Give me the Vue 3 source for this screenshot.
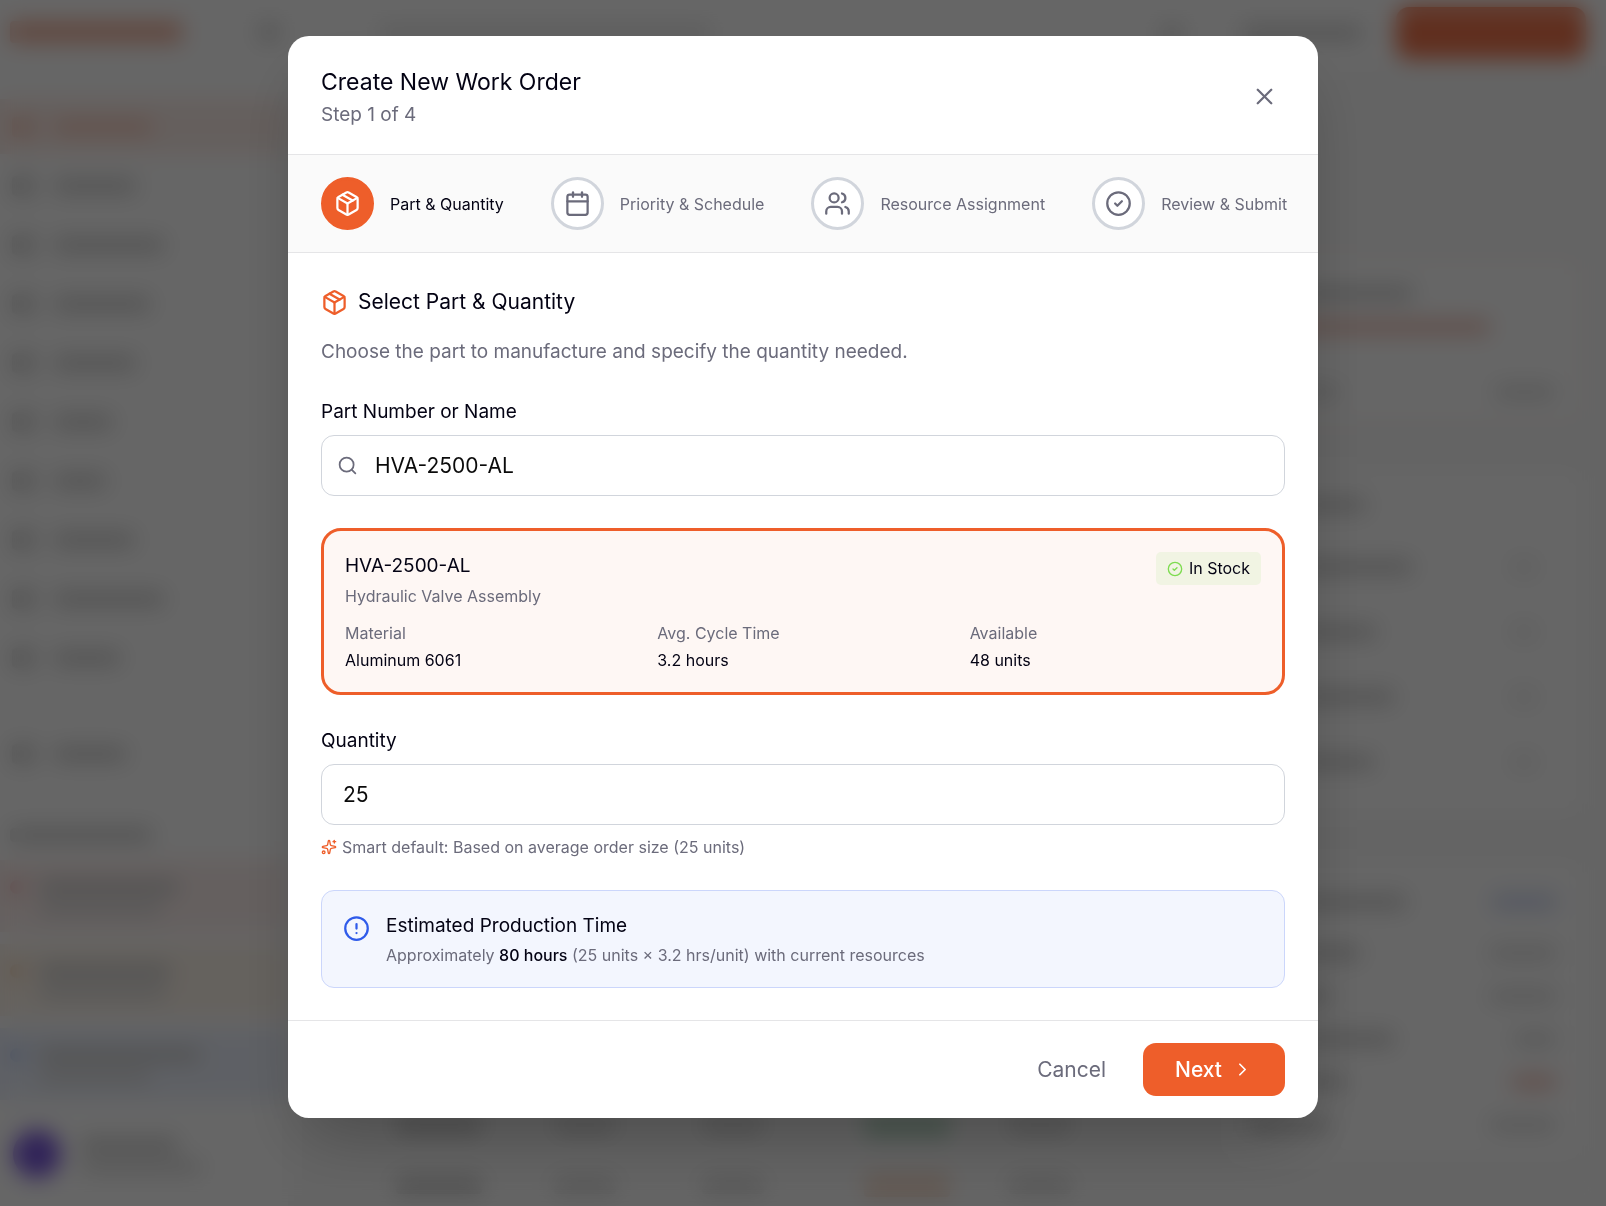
<template>
  <div class="page">
    <!-- dashboard behind the dialog -->
    <div class="dashboard" aria-hidden="true">
      <aside class="sidebar">
        <div class="brand">
          <span class="bar logo"></span>
          <span class="bar toggle"></span>
        </div>
        <div v-for="(w, i) in navWidths" :key="'nav' + i" class="nav-row" :class="{ active: i === 0 }">
          <span class="bar nav-icon"></span>
          <span class="bar nav-label" :style="{ width: w + 'px' }"></span>
        </div>
        <div class="nav-row settings">
          <span class="bar nav-icon"></span>
          <span class="bar nav-label short"></span>
        </div>
        <div class="alerts-heading"><span class="bar"></span></div>
        <div v-for="a in alerts" :key="a.tone" class="alert" :class="a.tone">
          <span class="dot"></span>
          <div class="alert-lines">
            <span class="bar" :style="{ width: a.first + 'px' }"></span>
            <span class="bar light" :style="{ width: a.second + 'px' }"></span>
          </div>
        </div>
        <div class="profile">
          <span class="avatar"></span>
          <div class="profile-lines">
            <span class="bar"></span>
            <span class="bar light"></span>
          </div>
        </div>
      </aside>

      <div class="main">
        <div class="topbar">
          <span class="bar search-line"></span>
          <span class="bar bell"></span>
          <span class="bar user"></span>
          <span class="create"></span>
        </div>
        <div class="columns">
          <div class="orders">
            <div v-for="tone in ['green', 'orange']" :key="tone" class="order-row">
              <span class="bar"></span>
              <span class="bar light"></span>
              <span class="bar light"></span>
              <span class="status" :class="tone"></span>
              <span class="bar light"></span>
            </div>
          </div>
          <div class="widgets">
            <div class="widget risk">
              <div class="line"><span class="bar title-line"></span></div>
              <div class="line"><span class="bar red-line"></span></div>
              <div class="line last">
                <span class="bar light"></span>
                <span class="bar light"></span>
              </div>
            </div>
            <div class="widget team">
              <div v-for="(w, i) in teamWidths" :key="'team' + i" class="line">
                <span class="bar" :style="{ width: w + 'px' }"></span>
                <span v-if="i > 0" class="bar badge-dot"></span>
              </div>
            </div>
            <div class="widget stats">
              <div v-for="(s, i) in stats" :key="'stat' + i" class="line">
                <span class="bar" :style="{ width: s.left + 'px' }"></span>
                <span class="bar light" :class="s.tone" :style="{ width: s.right + 'px' }"></span>
              </div>
            </div>
          </div>
        </div>
      </div>
    </div>

    <div class="overlay">
      <div class="modal" role="dialog" aria-modal="true" aria-labelledby="dialog-title">
        <header class="modal-header">
          <div>
            <h2 id="dialog-title">Create New Work Order</h2>
            <p>Step 1 of 4</p>
          </div>
          <button type="button" class="close" aria-label="Close">
            <svg class="icon" viewBox="0 0 24 24"><path d="M18 6 6 18" /><path d="m6 6 12 12" /></svg>
          </button>
        </header>

        <ol class="stepper">
          <li v-for="(step, i) in steps" :key="step.label" class="step" :class="{ current: i === 0 }">
            <span class="step-circle">
              <svg class="icon" viewBox="0 0 24 24"><path v-for="d in step.paths" :key="d" :d="d" /></svg>
            </span>
            <span class="step-label">{{ step.label }}</span>
          </li>
        </ol>

        <div class="modal-body">
          <h3>
            <svg class="icon" viewBox="0 0 24 24"><path v-for="d in packageIcon" :key="d" :d="d" /></svg>
            Select Part &amp; Quantity
          </h3>
          <p class="description">Choose the part to manufacture and specify the quantity needed.</p>

          <label for="part">Part Number or Name</label>
          <div class="field">
            <svg class="icon search-icon" viewBox="0 0 24 24"><circle cx="11" cy="11" r="8" /><path d="m21 21-4.3-4.3" /></svg>
            <input id="part" v-model="part" type="text" class="with-icon" />
          </div>

          <section class="part-card">
            <div class="part-top">
              <div>
                <h4>HVA-2500-AL</h4>
                <p>Hydraulic Valve Assembly</p>
              </div>
              <span class="stock">
                <svg class="icon" viewBox="0 0 24 24"><path v-for="d in checkIcon" :key="d" :d="d" /></svg>
                In Stock
              </span>
            </div>
            <dl class="part-facts">
              <div v-for="fact in facts" :key="fact.name">
                <dt>{{ fact.name }}</dt>
                <dd>{{ fact.value }}</dd>
              </div>
            </dl>
          </section>

          <label for="quantity">Quantity</label>
          <div class="field">
            <input id="quantity" v-model="quantity" type="text" inputmode="numeric" />
          </div>
          <p class="hint">
            <svg class="icon" viewBox="0 0 24 24">
              <path d="M11.017 2.814a1 1 0 0 1 1.966 0l1.051 5.558a2 2 0 0 0 1.594 1.594l5.558 1.051a1 1 0 0 1 0 1.966l-5.558 1.051a2 2 0 0 0-1.594 1.594l-1.051 5.558a1 1 0 0 1-1.966 0l-1.051-5.558a2 2 0 0 0-1.594-1.594l-5.558-1.051a1 1 0 0 1 0-1.966l5.558-1.051a2 2 0 0 0 1.594-1.594z" />
              <path d="M20 2v4" /><path d="M22 4h-4" /><circle cx="4" cy="20" r="2" />
            </svg>
            Smart default: Based on average order size (25 units)
          </p>

          <section class="estimate">
            <svg class="icon" viewBox="0 0 24 24"><circle cx="12" cy="12" r="10" /><path d="M12 8v4" /><path d="M12 16h.01" /></svg>
            <div>
              <h4>Estimated Production Time</h4>
              <p>Approximately <strong>80 hours</strong> (25 units × 3.2 hrs/unit) with current resources</p>
            </div>
          </section>
        </div>

        <footer class="modal-footer">
          <button type="button" class="cancel">Cancel</button>
          <button type="button" class="next">
            Next
            <svg class="icon" viewBox="0 0 24 24"><path d="m9 18 6-6-6-6" /></svg>
          </button>
        </footer>
      </div>
    </div>
  </div>
</template>

<script setup>
import { ref } from 'vue';

const part = ref('HVA-2500-AL');
const quantity = ref('25');

const packageIcon = [
  'M11 21.73a2 2 0 0 0 2 0l7-4A2 2 0 0 0 21 16V8a2 2 0 0 0-1-1.73l-7-4a2 2 0 0 0-2 0l-7 4A2 2 0 0 0 3 8v8a2 2 0 0 0 1 1.73z',
  'M12 22V12',
  'M3.29 7 12 12l8.71-5',
  'm7.5 4.27 9 5.15',
];

const checkIcon = [
  'M12 2a10 10 0 1 0 0 20 10 10 0 1 0 0-20z',
  'm9 12 2 2 4-4',
];

const steps = [
  { label: 'Part & Quantity', paths: packageIcon },
  {
    label: 'Priority & Schedule',
    paths: [
      'M8 2v4',
      'M16 2v4',
      'M5 4h14a2 2 0 0 1 2 2v14a2 2 0 0 1-2 2H5a2 2 0 0 1-2-2V6a2 2 0 0 1 2-2z',
      'M3 10h18',
    ],
  },
  {
    label: 'Resource Assignment',
    paths: [
      'M16 21v-2a4 4 0 0 0-4-4H6a4 4 0 0 0-4 4v2',
      'M9 3a4 4 0 1 0 0 8 4 4 0 1 0 0-8z',
      'M22 21v-2a4 4 0 0 0-3-3.87',
      'M16 3.13a4 4 0 0 1 0 7.75',
    ],
  },
  { label: 'Review & Submit', paths: checkIcon },
];

const facts = [
  { name: 'Material', value: 'Aluminum 6061' },
  { name: 'Avg. Cycle Time', value: '3.2 hours' },
  { name: 'Available', value: '48 units' },
];

const navWidths = [98, 82, 110, 96, 82, 58, 52, 80, 110, 66];

const alerts = [
  { tone: 'red', first: 138, second: 122 },
  { tone: 'amber', first: 130, second: 126 },
  { tone: 'blue', first: 160, second: 110 },
];

const teamWidths = [118, 164, 128, 146, 126];

const stats = [
  { left: 158, right: 64, tone: 'link' },
  { left: 112, right: 66, tone: '' },
  { left: 82, right: 66, tone: '' },
  { left: 146, right: 42, tone: '' },
  { left: 98, right: 44, tone: 'late' },
  { left: 82, right: 66, tone: '' },
];
</script>

<style>
body {
  margin: 0;
}
</style>

<style scoped>
* {
  box-sizing: border-box;
}

h2,
h3,
h4,
p,
dl,
dd,
ol {
  margin: 0;
  padding: 0;
  font-weight: 400;
}

button,
input {
  font-family: inherit;
}

.page {
  position: relative;
  height: 100vh;
  overflow: hidden;
  font-family: Inter, "Liberation Sans", sans-serif;
  color: #030213;
}

.icon {
  flex: none;
  width: 27px;
  height: 27px;
  fill: none;
  stroke: currentColor;
  stroke-width: 2;
  stroke-linecap: round;
  stroke-linejoin: round;
}

/* dashboard */
.dashboard {
  display: flex;
  height: 100%;
  background: #fff;
}

.bar {
  flex: none;
  display: block;
  height: 14px;
  border-radius: 4px;
  background: #cdcdcd;
}

.bar.light {
  background: #dcdcdc;
}

.sidebar {
  flex: none;
  width: 288px;
}

.brand {
  display: flex;
  justify-content: space-between;
  align-items: center;
  height: 99px;
  padding: 0 10px 35px;
}

.brand .logo {
  width: 172px;
  height: 22px;
  background: #f2b39e;
}

.brand .toggle {
  width: 18px;
  height: 18px;
}

.nav-row {
  display: flex;
  align-items: center;
  gap: 20px;
  height: 55px;
  margin-bottom: 4px;
  padding-left: 12px;
}

.nav-row.active {
  background: #fdeee9;
}

.nav-row.active .bar {
  background: #f7c8b9;
}

.nav-row.settings {
  margin-top: 41px;
}

.nav-icon {
  width: 22px;
  height: 20px;
}

.nav-label.short {
  width: 72px;
}

.alerts-heading {
  height: 75px;
  padding: 43px 10px 0;
}

.alerts-heading .bar {
  width: 142px;
}

.alert {
  display: flex;
  gap: 16px;
  height: 72px;
  margin-bottom: 12px;
  padding: 20px 10px;
}

.alert.red {
  background: #fdf0ee;
}

.alert.amber {
  background: #fdf4ea;
}

.alert.blue {
  background: #ecf1fc;
}

.dot {
  width: 14px;
  height: 14px;
  border-radius: 50%;
  background: #f0a8a8;
}

.amber .dot {
  background: #f3c8a0;
}

.blue .dot {
  background: #a8c0f5;
}

.alert-lines,
.profile-lines {
  display: flex;
  flex-direction: column;
  gap: 8px;
}

.profile {
  display: flex;
  gap: 20px;
  padding: 18px 13px;
}

.avatar {
  width: 48px;
  height: 48px;
  border-radius: 50%;
  background: #7856dc;
}

.profile-lines {
  padding-top: 8px;
}

.profile-lines .bar {
  width: 96px;
}

.profile-lines .bar.light {
  width: 120px;
}

.main {
  flex: 1;
  display: flex;
  flex-direction: column;
  min-width: 0;
}

.topbar {
  display: flex;
  align-items: center;
  height: 66px;
  padding: 0 20px 0 92px;
}

.topbar .search-line {
  width: 330px;
  background: #e2e2e2;
}

.topbar .bell {
  width: 20px;
  margin-left: auto;
}

.topbar .user {
  width: 120px;
  margin: 0 34px 0 60px;
}

.create {
  width: 190px;
  height: 52px;
  border-radius: 13px;
  background: #f0764e;
}

.columns {
  flex: 1;
  display: flex;
  min-height: 0;
  background: #fafafa;
}

.orders {
  flex: 1;
  display: flex;
  flex-direction: column;
  justify-content: flex-end;
  gap: 36px;
  padding: 0 0 9px 108px;
}

.order-row {
  display: grid;
  grid-template-columns: 158px 148px 162px 145px 1fr;
  align-items: center;
  height: 24px;
}

.order-row .bar {
  width: 86px;
  height: 18px;
}

.order-row .bar.light {
  width: 62px;
}

.status {
  width: 86px;
  height: 24px;
  border-radius: 4px;
}

.status.green {
  background: #bcdcc8;
}

.status.orange {
  background: #f4dccc;
}

.widgets {
  flex: none;
  width: 375px;
  padding: 188px 21px 0 0;
}

.widget {
  margin-bottom: 42px;
  padding: 20px 28px 20px 16px;
  border: 1px solid #f0f0f0;
  border-radius: 16px;
  background: #fff;
}

.line {
  display: flex;
  justify-content: space-between;
  align-items: center;
}

.risk {
  height: 171px;
  border: 2px solid #f6e6e0;
}

.risk .line {
  height: 34px;
}

.risk .last {
  margin-top: 31px;
}

.risk .last .bar {
  width: 60px;
}

.risk .last .bar:first-child {
  width: 90px;
}

.title-line {
  width: 164px;
}

.red-line {
  width: 240px;
  background: #f0c0b4;
}

.team {
  height: 350px;
}

.team .line {
  height: 65px;
}

.team .line:first-child {
  height: 34px;
  margin-bottom: 12px;
}

.badge-dot {
  width: 24px;
  margin-right: 20px;
  background: #e8e8e8;
}

.stats {
  height: 300px;
}

.stats .line {
  height: 43px;
}

.stats .line:first-child {
  margin-bottom: 8px;
}

.bar.link {
  background: #cdd6f2;
}

.bar.late {
  background: #f2c2b8;
}

/* dialog */
.overlay {
  position: absolute;
  inset: 0;
  display: flex;
  justify-content: center;
  align-items: flex-start;
  padding: 36px 20px;
  background: rgba(0, 0, 0, 0.6);
  backdrop-filter: blur(11px);
}

.modal {
  width: 100%;
  max-width: 1030px;
  border-radius: 21px;
  background: #fff;
  box-shadow: 0 33px 67px -16px rgba(0, 0, 0, 0.25);
  overflow: hidden;
}

.modal-header {
  display: flex;
  justify-content: space-between;
  align-items: center;
  padding: 27px 33px 25px;
  border-bottom: 1px solid #e5e5e7;
}

.modal-header h2 {
  font-size: 23px;
  line-height: 38px;
}

.modal-header p {
  font-size: 19px;
  line-height: 28px;
  color: #6b6b7b;
}

.close {
  display: flex;
  padding: 7px;
  border: 0;
  background: none;
  color: #6b6b7b;
}

.stepper {
  display: flex;
  gap: 47px;
  padding: 22px 33px;
  border-bottom: 1px solid #e5e5e7;
  background: #fafafa;
  list-style: none;
}

.step {
  display: flex;
  align-items: center;
  gap: 16px;
  font-size: 16px;
  white-space: nowrap;
  color: #6b6b7b;
}

.step-circle {
  display: flex;
  flex: none;
  justify-content: center;
  align-items: center;
  width: 53px;
  height: 53px;
  border: 3px solid #d1d5dc;
  border-radius: 50%;
  background: #fff;
}

.step.current {
  color: #030213;
}

.current .step-circle {
  border-color: #ee5e2a;
  background: #ee5e2a;
  color: #fff;
}

.modal-body {
  padding: 33px 33px 32px;
}

.modal-body h3 {
  display: flex;
  align-items: center;
  gap: 10px;
  font-size: 21px;
  line-height: 32px;
}

.modal-body h3 .icon {
  color: #ee5e2a;
}

.description {
  margin: 20px 0 32px;
  font-size: 19px;
  line-height: 28px;
  color: #6b6b7b;
}

label {
  display: block;
  margin-bottom: 10px;
  font-size: 19px;
  line-height: 27px;
}

.field {
  position: relative;
}

.field input {
  display: block;
  width: 100%;
  height: 61px;
  padding: 0 21px;
  border: 1px solid #d1d5dc;
  border-radius: 13px;
  background: #fff;
  font-size: 21px;
  color: #0a0a0a;
}

.field .with-icon {
  padding-left: 53px;
}

.search-icon {
  position: absolute;
  top: 20px;
  left: 16px;
  width: 21px;
  height: 21px;
  color: #6b6b7b;
}

.part-card {
  margin: 32px 0;
  padding: 21px 21px 19px;
  border: 3px solid #ee5e2a;
  border-radius: 20px;
  background: #fef7f4;
}

.part-top {
  display: flex;
  justify-content: space-between;
  align-items: flex-start;
}

.part-top h4 {
  font-size: 19px;
  line-height: 28px;
}

.part-top p {
  margin-top: 4px;
  font-size: 16px;
  line-height: 24px;
  color: #6b6b7b;
}

.stock {
  display: flex;
  align-items: center;
  gap: 6px;
  padding: 0 11px;
  border-radius: 5px;
  background: #f1f4e3;
  font-size: 16px;
  line-height: 33px;
}

.stock .icon {
  width: 16px;
  height: 16px;
  color: #7ddc4f;
}

.part-facts {
  display: grid;
  grid-template-columns: repeat(3, 1fr);
  gap: 21px;
  margin-top: 13px;
  font-size: 16px;
  line-height: 25px;
}

.part-facts dt {
  margin-bottom: 2px;
  color: #6b6b7b;
}

.hint {
  display: flex;
  align-items: center;
  gap: 5px;
  margin: 10px 0 31px;
  font-size: 16px;
  line-height: 24px;
  color: #6b6b7b;
}

.hint .icon {
  width: 16px;
  height: 16px;
  color: #ee5e2a;
}

.estimate {
  display: flex;
  gap: 16px;
  padding: 21px 21px 20px;
  border: 1px solid #cbd6fb;
  border-radius: 13px;
  background: #f3f6fe;
}

.estimate .icon {
  margin-top: 3px;
  color: #2f5bea;
}

.estimate h4 {
  font-size: 19px;
  line-height: 27px;
}

.estimate p {
  margin-top: 4px;
  font-size: 16px;
  line-height: 24px;
  color: #6b6b7b;
}

.estimate strong {
  font-weight: 500;
  color: #030213;
}

.modal-footer {
  display: flex;
  justify-content: flex-end;
  align-items: center;
  gap: 16px;
  padding: 22px 33px;
  border-top: 1px solid #e5e5e7;
}

.modal-footer button {
  display: flex;
  align-items: center;
  gap: 10px;
  height: 53px;
  border: 0;
  border-radius: 13px;
  font-size: 21px;
}

.cancel {
  padding: 0 21px;
  background: none;
  color: #6b6b7b;
}

.next {
  padding: 0 32px;
  background: #ee5e2a;
  font-weight: 500;
  color: #fff;
}

.next .icon {
  width: 21px;
  height: 21px;
}
</style>
